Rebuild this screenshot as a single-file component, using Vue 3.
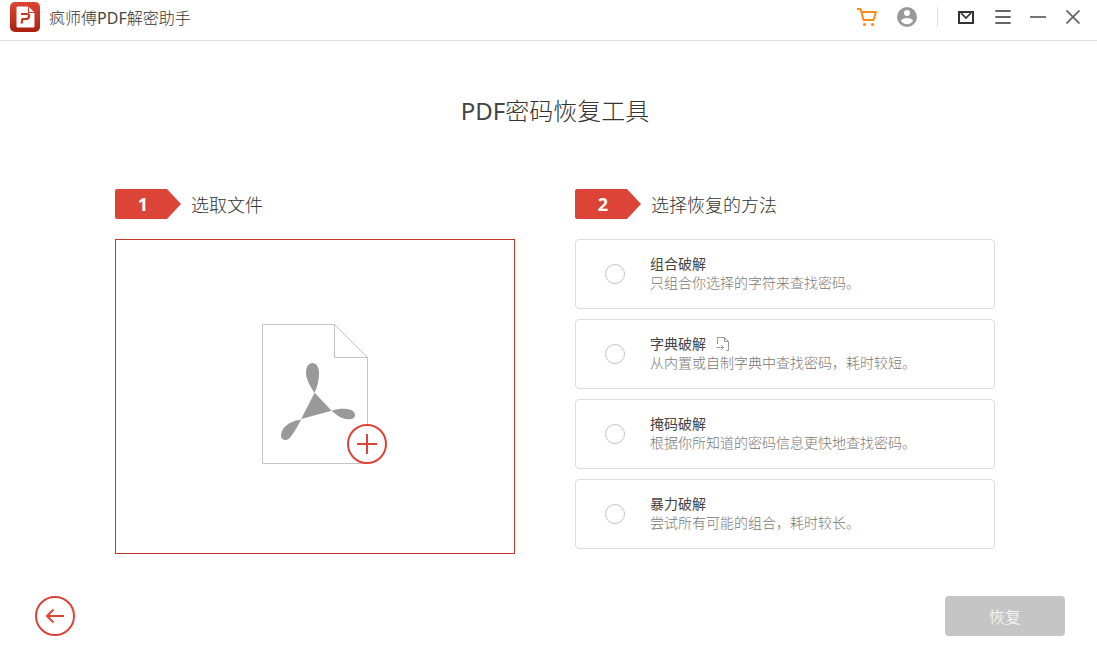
<script setup>
import { ref } from 'vue'

const method = ref('')
const methods = [
  { id: 'combo', name: '组合破解', desc: '只组合你选择的字符来查找密码。' },
  { id: 'dict', name: '字典破解', desc: '从内置或自制字典中查找密码，耗时较短。', importable: true },
  { id: 'mask', name: '掩码破解', desc: '根据你所知道的密码信息更快地查找密码。' },
  { id: 'brute', name: '暴力破解', desc: '尝试所有可能的组合，耗时较长。' },
]
</script>

<template>
  <div class="window">
    <header class="titlebar">
      <svg class="logo" width="30" height="30" viewBox="0 0 30 30" aria-hidden="true">
        <defs>
          <linearGradient id="logoFill" x1="0" y1="0" x2="0" y2="1">
            <stop offset="0" stop-color="#dc4433" />
            <stop offset="0.5" stop-color="#c93422" />
            <stop offset="1" stop-color="#a81f0e" />
          </linearGradient>
        </defs>
        <rect width="30" height="30" rx="5" fill="url(#logoFill)" />
        <path d="M7 5h11l6 6v14H7z" fill="#fff" stroke="#fff" stroke-width="1" stroke-linejoin="round" />
        <path d="M18 4.500V11h6.500z" fill="#cf3a29" />
        <path d="M19 5l5 5h-5z" fill="#fff" />
        <path d="M11 12h6q2.500 0 2 2.500t-3 2.500h-3.500l-1 4.500" fill="none" stroke="#c93422" stroke-width="2.200" stroke-linejoin="round" />
      </svg>
      <span class="app-name">疯师傅<span class="latin">PDF</span>解密助手</span>
      <nav class="tools">
        <button class="tool" aria-label="购物车">
          <svg width="22" height="20" viewBox="0 0 22 20" fill="none" stroke="#ff8c1a" stroke-width="2" stroke-linejoin="round">
            <path d="M1 2h3.500l3 11h10L20 5H5.400" />
            <circle cx="8.500" cy="17.500" r="1.600" fill="#ff8c1a" stroke="none" />
            <circle cx="16.500" cy="17.500" r="1.600" fill="#ff8c1a" stroke="none" />
          </svg>
        </button>
        <button class="tool account" aria-label="账户">
          <svg width="20" height="20" viewBox="0 0 20 20">
            <circle cx="10" cy="10" r="10" fill="#999" />
            <circle cx="10" cy="6" r="3" fill="#fff" />
            <path d="M4 14c0-2 4-3.100 6-3.100s6 1.100 6 3.100a7.200 7.200 0 0 1-12 0z" fill="#fff" />
          </svg>
        </button>
        <span class="divider"></span>
        <button class="tool mail" aria-label="消息">
          <svg width="16" height="14" viewBox="0 0 16 14" fill="none" stroke="#333">
            <rect x="1" y="2" width="14" height="11" stroke-width="2" />
            <path d="M3 3l5 5 5-5" stroke-width="1.700" />
          </svg>
        </button>
        <button class="tool menu" aria-label="菜单">
          <svg width="16" height="14" viewBox="0 0 16 14" stroke="#666" stroke-width="1.800" stroke-linecap="round">
            <path d="M1 1h14M1 7h14M1 13h14" />
          </svg>
        </button>
        <button class="tool minimize" aria-label="最小化">
          <svg width="16" height="14" viewBox="0 0 16 14" stroke="#666" stroke-width="1.800">
            <path d="M0 7h16" />
          </svg>
        </button>
        <button class="tool close" aria-label="关闭">
          <svg width="14" height="14" viewBox="0 0 14 14" stroke="#666" stroke-width="1.800">
            <path d="M0.500 0.500l13 13M13.500 0.500l-13 13" />
          </svg>
        </button>
      </nav>
    </header>

    <main class="content">
      <h1><span class="latin">PDF</span>密码恢复工具</h1>
      <div class="columns">
        <section class="column">
          <div class="step">
            <span class="tag">1</span>
            <h2>选取文件</h2>
          </div>
          <button class="picker" aria-label="选取文件">
            <svg width="144" height="140" viewBox="0 0 144 140" fill="none">
              <path d="M19.500 0.500h72l33 33v106h-105z" stroke="#c4c4c4" />
              <path d="M91.500 0.500v33h33" stroke="#c4c4c4" />
              <g fill="#999">
                <path d="M71.600 68.800L88.600 86.700 58.200 95z" />
                <path d="M71.600 68.800C66 61 63 54 63 48.500c0-6 3-9.500 6.200-9.500 4 0 6.800 3.500 6.800 10.500 0 6.500-1.500 13-4.400 19.300z" />
                <path d="M88.600 86.700c6-2 11-2.200 15-1.700 5.500.6 8.400 3 8.400 6 0 3.200-3 4.500-7 4.200-6-.5-11-3.500-16.400-8.500z" />
                <path d="M58.200 95.500C53 105 49 112 45.500 115c-3.500 2.300-7.500.5-7.500-3.500 0-6 6-14 20.200-16z" />
              </g>
              <circle cx="124" cy="120" r="19" fill="#fff" stroke="#db4437" stroke-width="2" />
              <path d="M114 120h20M124 110v20" stroke="#db4437" stroke-width="2" />
            </svg>
          </button>
        </section>

        <section class="column">
          <div class="step">
            <span class="tag">2</span>
            <h2>选择恢复的方法</h2>
          </div>
          <div class="methods">
            <label v-for="m in methods" :key="m.id" class="method">
              <input v-model="method" type="radio" name="method" :value="m.id" />
              <span class="method-text">
                <span class="method-name">
                  {{ m.name }}
                  <svg v-if="m.importable" width="14" height="15" viewBox="0 0 14 15" fill="none" stroke="#999">
                    <path d="M1.500 8V1.500h7l4 4v9H10M8.500 1.500v4h4" />
                    <path d="M0.500 11.500h7M5 9l2.500 2.500L5 14" />
                  </svg>
                </span>
                <span class="method-desc">{{ m.desc }}</span>
              </span>
            </label>
          </div>
        </section>
      </div>
    </main>

    <footer class="actions">
      <button class="back" aria-label="返回">
        <svg width="40" height="40" viewBox="0 0 40 40" fill="none" stroke="#db4437" stroke-width="2">
          <circle cx="20" cy="20" r="19" />
          <path d="M29 20H12M18.500 13.500L12 20l6.500 6.500" />
        </svg>
      </button>
      <button class="recover" disabled>恢复</button>
    </footer>
  </div>
</template>

<style>
body {
  margin: 0;
  background: #fff;
}
</style>

<style scoped>
.window {
  display: flex;
  flex-direction: column;
  min-height: 100vh;
  box-sizing: border-box;
  font-family: "Open Sans", "Noto Sans CJK SC", sans-serif;
  font-weight: 300;
  color: #333;
}
button {
  padding: 0;
  border: 0;
  background: none;
  font: inherit;
  cursor: pointer;
}
svg {
  display: block;
}
.latin {
  color: #444;
  font-family: "Noto Sans", "Open Sans", sans-serif;
  font-weight: 400;
}
.titlebar {
  display: flex;
  align-items: center;
  height: 40px;
  padding: 0 17px 0 10px;
  border-bottom: 1px solid #ddd;
}
.logo {
  margin-bottom: 6px;
}
.app-name {
  margin: 0 auto 4px 9px;
  font-size: 16px;
  line-height: 24px;
}
.tools {
  display: flex;
  align-items: center;
  align-self: flex-start;
  height: 34px;
}
.account {
  margin-left: 19px;
}
.divider {
  width: 1px;
  height: 20px;
  margin: 0 20px;
  background: #ddd;
}
.menu {
  margin-left: 21px;
}
.minimize {
  margin-left: 19px;
}
.close {
  margin-left: 20px;
}
.content {
  padding: 52px 102px 0 115px;
}
h1 {
  margin: 0 0 60px;
  font-size: 24px;
  font-weight: 300;
  line-height: 36px;
  text-align: center;
}
.columns {
  display: grid;
  grid-template-columns: 20fr 21fr;
  gap: 60px;
}
.column {
  display: flex;
  flex-direction: column;
}
.step {
  display: flex;
  align-items: center;
  gap: 10px;
  margin-bottom: 20px;
}
.tag {
  box-sizing: border-box;
  width: 66px;
  height: 30px;
  padding-right: 10px;
  border-radius: 2px;
  background: #db4437;
  clip-path: polygon(0 0, 52px 0, 100% 50%, 52px 100%, 0 100%);
  color: #fff;
  font-size: 18px;
  font-weight: 700;
  line-height: 30px;
  text-align: center;
}
h2 {
  margin: 0;
  padding-top: 2px;
  font-size: 18px;
  font-weight: 300;
  line-height: 28px;
}
.picker {
  display: flex;
  align-items: center;
  justify-content: center;
  box-sizing: border-box;
  min-height: 315px;
  padding-bottom: 6px;
  border: 1px solid #c0392b;
}
.methods {
  display: flex;
  flex-direction: column;
  gap: 10px;
}
.method {
  display: flex;
  align-items: center;
  gap: 25px;
  padding: 0 29px;
  min-height: 68px;
  border: 1px solid #ddd;
  border-radius: 4px;
  cursor: pointer;
}
.method input {
  appearance: none;
  flex: none;
  box-sizing: border-box;
  width: 20px;
  height: 20px;
  margin: 0;
  border: 1px solid #c4c4c4;
  border-radius: 50%;
}
.method input:checked {
  border: 6px solid #db4437;
}
.method-text {
  display: flex;
  flex-direction: column;
  padding-bottom: 2px;
  font-size: 14px;
  line-height: 19px;
}
.method-name {
  display: flex;
  align-items: center;
  gap: 10px;
  color: #444;
  font-weight: 400;
}
.method-desc {
  color: #777;
}
.actions {
  display: flex;
  align-items: center;
  justify-content: space-between;
  margin-top: auto;
  padding: 20px 32px 30px 35px;
}
.recover {
  width: 120px;
  height: 40px;
  border-radius: 4px;
  background: #c5c5c5;
  color: #fff;
  font-size: 16px;
}
</style>
